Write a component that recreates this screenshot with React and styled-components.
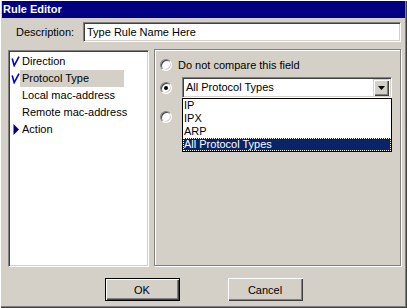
import React from 'react';
import styled, { createGlobalStyle } from 'styled-components';

const Global = createGlobalStyle`
  html, body { margin: 0; padding: 0; background: #d4d0c8; }
  body { font-family: "Liberation Sans", Arial, sans-serif; font-size: 11px; color: #000; }
  * { box-sizing: border-box; }
`;

const Window = styled.div`
  width: 407px;
  height: 308px;
  display: flex;
  flex-direction: column;
  background: #d4d0c8;
  padding: 1px 2px 2px 2px;
  box-shadow: inset 1px 1px 0 #fff, inset -1px -1px 0 #404040, inset -2px -2px 0 #808080;
`;

const TitleBar = styled.div`
  height: 17px;
  background: #000080;
  color: #fff;
  font-weight: bold;
  font-size: 11px;
  line-height: 17px;
  padding-left: 1px;
`;

const DescRow = styled.div`
  display: flex;
  align-items: center;
  margin-top: 4px;
  padding: 0 4px 0 14px;
`;

const DescLabel = styled.label`
  width: 67px;
`;

const TextField = styled.div`
  flex: 1;
  height: 20px;
  background: #fff;
  border-style: solid;
  border-width: 1px;
  border-color: #808080 #fff #fff #808080;
  box-shadow: inset 1px 1px 0 #404040, inset -1px -1px 0 #d4d0c8;
  padding-left: 3px;
  line-height: 18px;
`;

const Body = styled.div`
  display: flex;
  align-items: flex-start;
  gap: 5px;
  margin-top: 7px;
  padding-left: 6px;
`;

const ListPane = styled.div`
  width: 141px;
  height: 217px;
  margin-top: 1px;
  background: #fff;
  border-style: solid;
  border-width: 1px;
  border-color: #808080 #fff #fff #808080;
  box-shadow: inset 1px 1px 0 #404040, inset -1px -1px 0 #d4d0c8;
  padding: 2px 0 0 2px;
  display: flex;
  flex-direction: column;
`;

const TreeRow = styled.div`
  display: flex;
  align-items: center;
  height: 17px;
`;

const IconSlot = styled.span`
  width: 9px;
  height: 17px;
  display: flex;
  align-items: center;
  justify-content: center;
`;

const TreeLabel = styled.span`
  width: 104px;
  height: 17px;
  line-height: 17px;
  padding: 0 2px;
  background: ${p => (p.$selected ? '#d4d0c8' : 'transparent')};
  white-space: nowrap;
`;

const RightPane = styled.div`
  width: 247px;
  height: 217px;
  border: 1px solid #808080;
  box-shadow: 1px 1px 0 #fff, inset 1px 1px 0 #fff;
  padding: 7px 0 0 5px;
  display: flex;
  flex-direction: column;
`;

const OptionRow = styled.div`
  display: flex;
  align-items: center;
  height: ${p => p.$h}px;
  margin-top: ${p => p.$mt || 0}px;
  gap: ${p => p.$gap}px;
`;

const Radio = styled.span`
  width: 12px;
  height: 12px;
  flex: none;
  border-radius: 50%;
  background: #fff;
  border-style: solid;
  border-width: 1px;
  border-color: #808080 #fff #fff #808080;
  box-shadow: inset 1px 1px 0 #404040, inset -1px -1px 0 #d4d0c8;
  display: flex;
  align-items: center;
  justify-content: center;
  &::after {
    content: '';
    width: 4px;
    height: 4px;
    border-radius: 50%;
    background: ${p => (p.$checked ? '#000' : 'transparent')};
  }
`;

const ComboWrap = styled.div`
  position: relative;
  width: 210px;
  height: 21px;
`;

const Combo = styled.div`
  width: 100%;
  height: 100%;
  background: #fff;
  border-style: solid;
  border-width: 1px;
  border-color: #808080 #fff #fff #808080;
  box-shadow: inset 1px 1px 0 #404040, inset -1px -1px 0 #d4d0c8;
  display: flex;
  align-items: center;
  padding: 2px;
`;

const ComboText = styled.span`
  flex: 1;
  padding-left: 1px;
  line-height: 17px;
`;

const ArrowButton = styled.span`
  width: 16px;
  height: 17px;
  background: #d4d0c8;
  box-shadow: inset 1px 1px 0 #d4d0c8, inset 2px 2px 0 #fff, inset -1px -1px 0 #404040, inset -2px -2px 0 #808080;
  display: flex;
  align-items: center;
  justify-content: center;
`;

const DropList = styled.div`
  position: absolute;
  left: 0;
  top: 100%;
  width: 210px;
  background: #fff;
  border: 1px solid #000;
  display: flex;
  flex-direction: column;
  z-index: 2;
`;

const DropItem = styled.div`
  height: 13px;
  line-height: 13px;
  padding-left: 1px;
  color: ${p => (p.$selected ? '#fff' : '#000')};
  background: ${p => (p.$selected ? '#0a246a' : 'transparent')};
  outline: ${p => (p.$selected ? '1px dotted #fff' : 'none')};
  outline-offset: -1px;
  white-space: nowrap;
`;

const Footer = styled.div`
  display: flex;
  justify-content: center;
  gap: 48px;
  margin-top: 11px;
`;

const Button = styled.div`
  width: 75px;
  height: 23px;
  display: flex;
  align-items: center;
  justify-content: center;
  background: #d4d0c8;
  border: ${p => (p.$default ? '1px solid #000' : 'none')};
  box-shadow: ${p =>
    p.$default
      ? 'inset 1px 1px 0 #fff, inset -1px -1px 0 #404040, inset -2px -2px 0 #808080'
      : 'inset 1px 1px 0 #fff, inset -1px -1px 0 #404040, inset -2px -2px 0 #808080'};
`;

const Check = () => (
  <svg width="9" height="11" viewBox="0 0 9 11">
    <path d="M1.2 2.5 L3.2 9.6 L8 0.6" fill="none" stroke="#0000d0" strokeWidth="1.6" />
  </svg>
);

const Arrow = () => (
  <svg width="6" height="11" viewBox="0 0 6 11">
    <path d="M0.5 0 L6 5.5 L0.5 11 Z" fill="#000080" />
  </svg>
);

const DownTri = () => (
  <svg width="7" height="4" viewBox="0 0 7 4">
    <path d="M0 0 H7 L3.5 4 Z" fill="#000" />
  </svg>
);

const treeItems = [
  { label: 'Direction', icon: 'check' },
  { label: 'Protocol Type', icon: 'check', selected: true },
  { label: 'Local mac-address' },
  { label: 'Remote mac-address' },
  { label: 'Action', icon: 'arrow' },
];

const protocols = ['IP', 'IPX', 'ARP', 'All Protocol Types'];

export default function App() {
  return (
    <>
      <Global />
      <Window>
        <TitleBar>Rule Editor</TitleBar>
        <DescRow>
          <DescLabel>Description:</DescLabel>
          <TextField>Type Rule Name Here</TextField>
        </DescRow>
        <Body>
          <ListPane>
            {treeItems.map(it => (
              <TreeRow key={it.label}>
                <IconSlot>
                  {it.icon === 'check' && <Check />}
                  {it.icon === 'arrow' && <Arrow />}
                </IconSlot>
                <TreeLabel $selected={it.selected}>{it.label}</TreeLabel>
              </TreeRow>
            ))}
          </ListPane>
          <RightPane>
            <OptionRow $h={16} $gap={6}>
              <Radio />
              <span>Do not compare this field</span>
            </OptionRow>
            <OptionRow $h={21} $mt={4} $gap={10}>
              <Radio $checked />
              <ComboWrap>
                <Combo>
                  <ComboText>All Protocol Types</ComboText>
                  <ArrowButton>
                    <DownTri />
                  </ArrowButton>
                </Combo>
                <DropList>
                  {protocols.map(p => (
                    <DropItem key={p} $selected={p === 'All Protocol Types'}>
                      {p}
                    </DropItem>
                  ))}
                </DropList>
              </ComboWrap>
            </OptionRow>
            <OptionRow $h={21} $mt={8} $gap={10}>
              <Radio />
            </OptionRow>
          </RightPane>
        </Body>
        <Footer>
          <Button $default>OK</Button>
          <Button>Cancel</Button>
        </Footer>
      </Window>
    </>
  );
}
